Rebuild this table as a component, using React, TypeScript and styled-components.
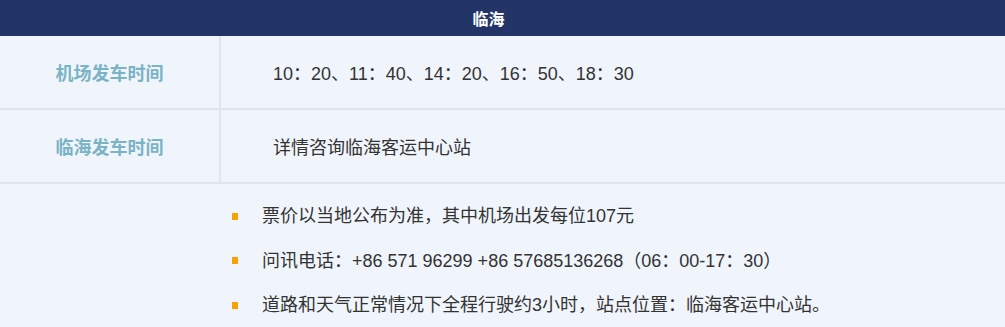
import styled, { createGlobalStyle } from "styled-components";

const GlobalStyle = createGlobalStyle`
  html, body {
    margin: 0;
    padding: 0;
    background: #f0f5fb;
  }
  body {
    font-family: "Liberation Sans", "Noto Sans CJK SC", Arial, sans-serif;
    color: #333;
  }
`;

const StyledSchedule = styled.section`
  width: 1005px;
  background: #f0f5fb;
`;

const Header = styled.div`
  height: 36px;
  padding-right: 28px;
  background: #233567;
  color: #fff;
  font-size: 16px;
  font-weight: 700;
  display: flex;
  align-items: center;
  justify-content: center;
`;

const Row = styled.div`
  display: grid;
  grid-template-columns: 221px 1fr;
  height: 72px;
  border-bottom: 2px solid #dfe5ee;
`;

const Label = styled.div`
  border-right: 2px solid #dfe5ee;
  display: flex;
  align-items: center;
  justify-content: center;
  color: #7ab3c5;
  font-size: 18px;
  font-weight: 700;
`;

const Value = styled.div`
  display: flex;
  align-items: center;
  padding-left: 52px;
  font-size: 18px;
  color: #333;
`;

const Notes = styled.ul`
  list-style: none;
  margin: 0;
  padding: 21px 0 0 232px;
  display: flex;
  flex-direction: column;
  gap: 22px;
`;

const Note = styled.li`
  display: flex;
  align-items: center;
  gap: 24px;
  font-size: 18px;
  line-height: 22.5px;
  color: #333;

  &::before {
    content: "";
    width: 6px;
    height: 7px;
    background: #f6a200;
    flex-shrink: 0;
  }
`;

const rows = [
  { label: "机场发车时间", value: "10：20、11：40、14：20、16：50、18：30" },
  { label: "临海发车时间", value: "详情咨询临海客运中心站" },
];

const notes = [
  "票价以当地公布为准，其中机场出发每位107元",
  "问讯电话：+86 571 96299 +86 57685136268（06：00-17：30）",
  "道路和天气正常情况下全程行驶约3小时，站点位置：临海客运中心站。",
];

const App = () => {
  return (
    <>
      <GlobalStyle />
      <StyledSchedule>
        <Header>临海</Header>
        {rows.map((row) => (
          <Row key={row.label}>
            <Label>{row.label}</Label>
            <Value>{row.value}</Value>
          </Row>
        ))}
        <Notes>
          {notes.map((note) => (
            <Note key={note}>{note}</Note>
          ))}
        </Notes>
      </StyledSchedule>
    </>
  );
};

export default App;
